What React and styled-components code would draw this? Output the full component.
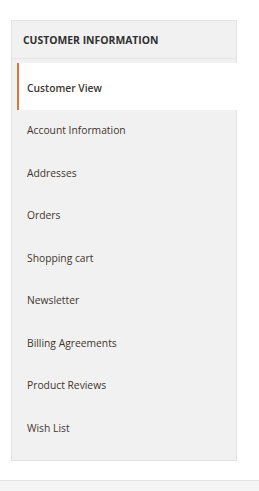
import React from 'react';
import styled, { createGlobalStyle } from 'styled-components';

const GlobalStyle = createGlobalStyle`
  body {
    margin: 0;
    background: #fff;
    font-family: 'Open Sans', 'Liberation Sans', sans-serif;
  }
`;

const items = [
  'Account Information',
  'Addresses',
  'Orders',
  'Shopping cart',
  'Newsletter',
  'Billing Agreements',
  'Product Reviews',
  'Wish List',
];

const App = () => {
  return (
    <Page>
      <GlobalStyle />
      <Panel>
        <Header>Customer Information</Header>
        <ActiveItem>Customer View</ActiveItem>
        <List>
          {items.map((item) => (
            <Item key={item}>{item}</Item>
          ))}
        </List>
      </Panel>
      <Footer />
    </Page>
  );
};

export default App;

const Page = styled.div`
  width: 259px;
  height: 491px;
  padding-top: 20px;
  box-sizing: border-box;
  display: flex;
  flex-direction: column;
  overflow: hidden;
`;

const Panel = styled.div`
  margin-left: 11px;
  width: 226px;
  background: #f1f1f1;
  border: 1px solid #e3e3e3;
  box-sizing: border-box;
`;

const Header = styled.div`
  height: 37px;
  display: flex;
  align-items: center;
  padding-left: 11px;
  margin-bottom: 4px;
  font-size: 10.4px;
  font-weight: 700;
  text-transform: uppercase;
  color: #303030;
  border-bottom: 1px solid #e6e6e6;
`;

const ActiveItem = styled.div`
  margin-left: 5px;
  margin-right: -1px;
  height: 47px;
  display: flex;
  align-items: center;
  padding-left: 8px;
  padding-top: 2px;
  box-sizing: border-box;
  background: #fff;
  border-left: 2px solid #d9773f;
  font-size: 10.3px;
  font-weight: 600;
  color: #41362f;
`;

const List = styled.div`
  display: flex;
  flex-direction: column;
  margin-top: -1px;
  padding-bottom: 11px;
`;

const Item = styled.div`
  height: 42.5px;
  display: flex;
  align-items: center;
  padding-left: 15px;
  font-size: 10.3px;
  color: #41362f;
`;

const Footer = styled.div`
  margin-top: auto;
  height: 10px;
  background: #f5f5f5;
  border-top: 1px solid #e3e3e3;
`;
